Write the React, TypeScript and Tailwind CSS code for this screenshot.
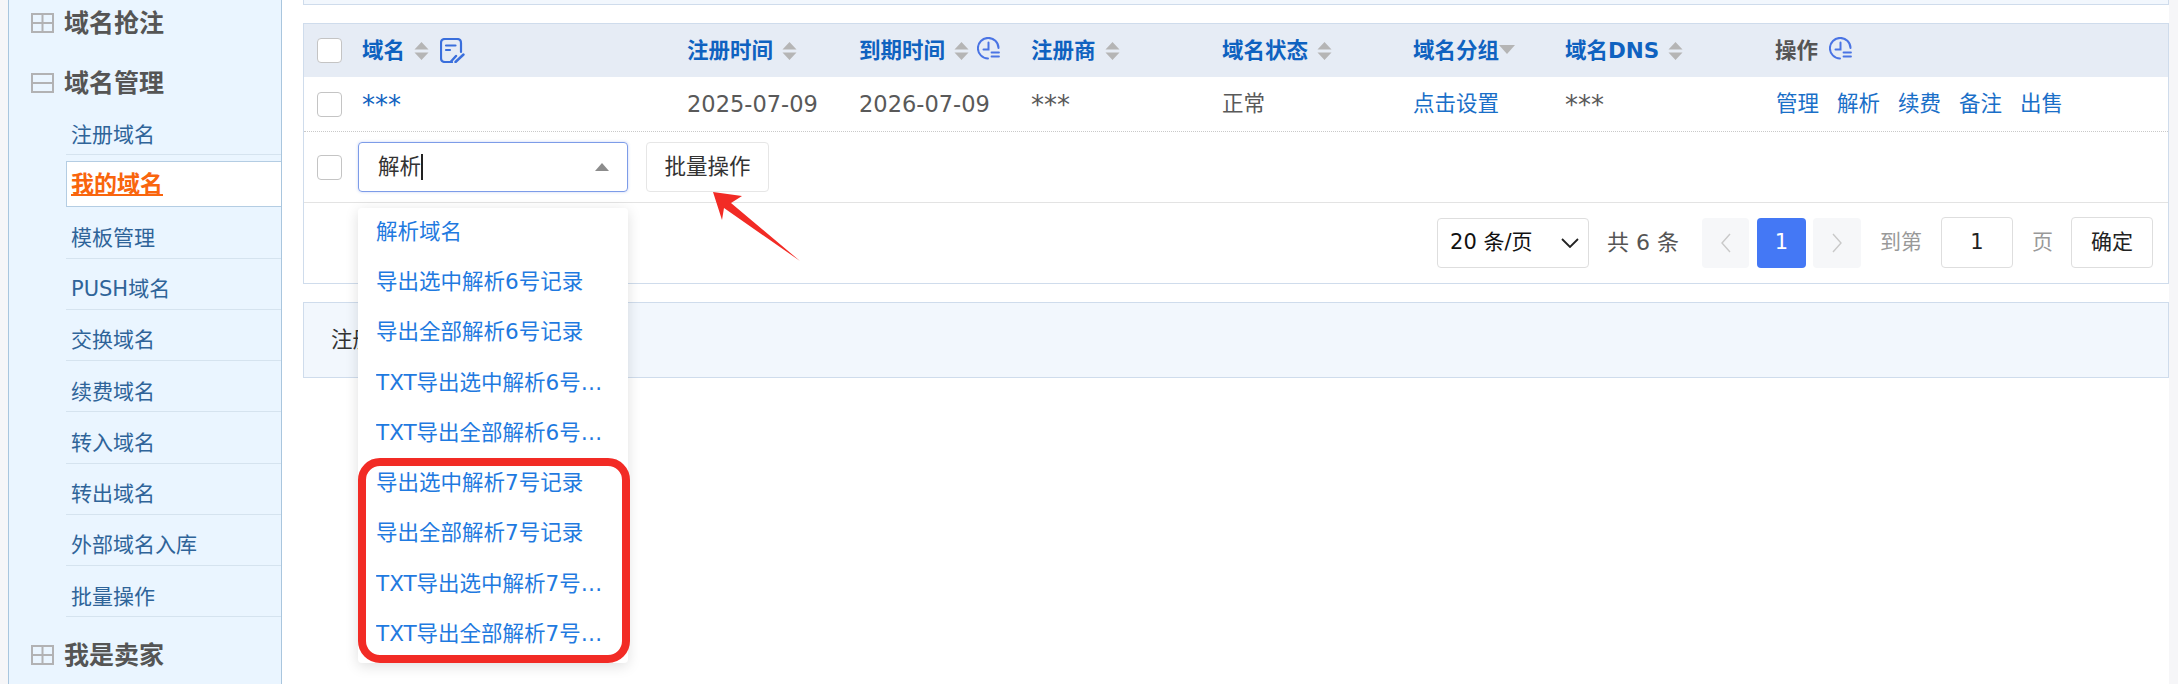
const cjk = "font-['DejaVu_Sans','Noto_Sans_CJK_SC',sans-serif]";

function SortIcon({ className = "" }: { className?: string }) {
	return (
		<svg width="15" height="18" viewBox="0 0 15 18" className={className}>
			<path d="M7.5 0 L14.5 7.5 H0.5 Z M0.5 10.5 H14.5 L7.5 18 Z" fill="#b5b5b5" />
		</svg>
	);
}

function NoteIcon() {
	return (
		<svg width="25" height="25" viewBox="0 0 25 25" fill="none" stroke="#3a6fdc" strokeWidth="2.2" strokeLinecap="round" className="ml-[11px]">
			<path d="M12 24 H5 Q1 24 1 20 V5 Q1 1 5 1 H17 Q21 1 21 5 V14" />
			<path d="M6 7.5 H15.5 M6 12 H10" />
			<path d="M11 23.5 L16 18 M15.5 24 L23.5 16.5" strokeWidth="2.4" />
		</svg>
	);
}

function ClockIcon({ className = "" }: { className?: string }) {
	return (
		<svg width="23" height="24" viewBox="0 0 23 24" fill="none" stroke="#4a74e4" strokeWidth="2" strokeLinecap="round" className={className}>
			<path d="M21.5 11 A10.3 10.3 0 1 0 11 21.5" />
			<path d="M11.5 5.5 V12.5 H6.5" />
			<path d="M14.5 15.5 H22 M22 19.5 H14.5" strokeWidth="1.8" />
		</svg>
	);
}

function TreeIcon({ open }: { open?: boolean }) {
	return (
		<svg width="23" height="20" viewBox="0 0 23 20" fill="none" stroke="#b2b2b4" strokeWidth="2" className="mr-[10px]">
			<rect x="1" y="1" width="21" height="18" />
			<path d={open ? "M1 10 H22" : "M1 10 H22 M11.5 1 V19"} />
		</svg>
	);
}

function Checkbox() {
	return <span className="block w-[25px] h-[25px] rounded-[4px] border border-[#c4c4c4] bg-white" />;
}

function SideGroup({ label, open }: { label: string; open?: boolean }) {
	return (
		<div className="h-[46px] flex items-center pl-[22px] text-[25px] font-bold text-[#555] leading-none">
			<TreeIcon open={open} />
			{label}
		</div>
	);
}

function SideLink({ label }: { label: string }) {
	return (
		<div className="h-[51.25px] ml-[57px] pl-[5px] pt-[12px] flex items-center border-b border-[#d5e3ef] text-[21px] text-[#2f6499] leading-none">
			{label}
		</div>
	);
}

function HeadCell({ label, sort = true, children, dark }: { label: string; sort?: boolean; children?: React.ReactNode; dark?: boolean }) {
	return (
		<div className={`flex items-center font-bold text-[21.5px] leading-none ${dark ? "text-[#555]" : "text-[#0f62c0]"}`}>
			{label}
			{sort && <SortIcon className="ml-[9px]" />}
			{children}
		</div>
	);
}

const menuItems = [
	"解析域名",
	"导出选中解析6号记录",
	"导出全部解析6号记录",
	"TXT导出选中解析6号记录",
	"TXT导出全部解析6号记录",
	"导出选中解析7号记录",
	"导出全部解析7号记录",
	"TXT导出选中解析7号记录",
	"TXT导出全部解析7号记录",
];

const tableCols = "grid grid-cols-[45px_325px_172px_172px_191px_191px_152px_210px_1fr] items-center";

export default function App() {
	return (
		<div className={`relative flex w-[2178px] h-[684px] overflow-hidden bg-white ${cjk}`}>
			<div className="w-[8px] bg-[#f6f6f8] shrink-0" />
			<aside className="w-[274px] shrink-0 bg-[#eaf5ff] border-x border-[#a9c6de]">
				<SideGroup label="域名抢注" />
				<div className="mt-[14px]">
					<SideGroup label="域名管理" open />
				</div>
				<div className="mt-[-2px]">
					<SideLink label="注册域名" />
					<div className="mt-[6px] ml-[57px] h-[46px] flex items-center pl-[4px] bg-white border border-r-0 border-[#b4cde3] text-[23px] font-bold text-[#f9650d] underline leading-none">
						我的域名
					</div>
					{["模板管理", "PUSH域名", "交换域名", "续费域名", "转入域名", "转出域名", "外部域名入库", "批量操作"].map((label) => (
						<SideLink key={label} label={label} />
					))}
				</div>
				<div className="mt-[15px]">
					<SideGroup label="我是卖家" />
				</div>
			</aside>

			<main className="w-[1866px] ml-[21px] shrink-0">
				<div className="h-[5px] border-x border-b border-[#cfdcec] bg-[#f2f7fd]" />

				<section className="mt-[18px] border border-[#cfdcec] h-[261px]">
					<div className={`${tableCols} h-[53px] bg-[#e6ecf5] pl-[13px]`}>
						<Checkbox />
						<HeadCell label="域名">
							<NoteIcon />
						</HeadCell>
						<HeadCell label="注册时间" />
						<HeadCell label="到期时间">
							<ClockIcon className="ml-[8px] -mt-[3px]" />
						</HeadCell>
						<HeadCell label="注册商" />
						<HeadCell label="域名状态" />
						<div className="flex items-center font-bold text-[21.5px] leading-none text-[#0f62c0]">
							域名分组
							<svg width="16" height="9" viewBox="0 0 16 9" className="-mt-[3px]">
								<path d="M0 0 H16 L8 9 Z" fill="#b5b5b5" />
							</svg>
						</div>
						<HeadCell label="域名DNS" />
						<HeadCell label="操作" sort={false} dark>
							<ClockIcon className="ml-[11px] -mt-[3px]" />
						</HeadCell>
					</div>

					<div className={`${tableCols} h-[55px] pl-[13px] border-b border-dotted border-[#c9c9c9] text-[21.5px] text-[#595959] leading-none`}>
						<Checkbox />
						<span className="text-[#0f62c0] text-[26px] mt-[2px]">***</span>
						<span className="text-[22.5px]">2025-07-09</span>
						<span className="text-[22.5px]">2026-07-09</span>
						<span className="text-[26px] mt-[2px]">***</span>
						<span>正常</span>
						<span className="text-[#1a6fc8]">点击设置</span>
						<span className="text-[26px] mt-[2px]">***</span>
						<div className="ml-[1px] flex gap-[18px] text-[#1a6fc8]">
							{["管理", "解析", "续费", "备注", "出售"].map((t) => (
								<span key={t}>{t}</span>
							))}
						</div>
					</div>

					<div className="h-[71px] flex items-center pl-[13px] border-b border-[#e3e3e3]">
						<Checkbox />
						<div className="ml-[16px] w-[270px] h-[50px] flex items-center rounded-[4px] border border-[#7d9ce8] shadow-[0_0_3px_rgba(70,110,230,0.3)] pl-[19px] pr-[18px] text-[21.5px] text-[#333] leading-none">
							<span>解析</span>
							<span className="w-[2px] h-[26px] bg-[#222]" />
							<svg width="14" height="8" viewBox="0 0 14 8" className="ml-auto">
								<path d="M7 0 L14 8 H0 Z" fill="#8c8c8c" />
							</svg>
						</div>
						<div className="ml-[18px] w-[123px] h-[50px] flex items-center justify-center rounded-[4px] border border-[#e6e6e6] text-[21.5px] text-[#333] leading-none">
							批量操作
						</div>
					</div>

					<div className="flex items-center justify-end pt-[14px] pr-[15px] text-[21px] leading-none">
						<div className="w-[152px] h-[50px] flex items-center justify-between pl-[12px] pr-[9px] rounded-[4px] border border-[#dedede] text-[#111]">
							<span>20 条/页</span>
							<svg width="18" height="10" viewBox="0 0 18 10" fill="none" stroke="#222" strokeWidth="1.8">
								<path d="M1 1 L9 9 L17 1" />
							</svg>
						</div>
						<span className="ml-[18px] mr-[23px] text-[#555] text-[22px]">共 6 条</span>
						<div className="w-[47px] h-[50px] flex items-center justify-center rounded-[4px] bg-[#f6f7f9]">
							<svg width="10" height="20" viewBox="0 0 10 20" fill="none" stroke="#c9c9c9" strokeWidth="1.4">
								<path d="M9 1 L1 10 L9 19" />
							</svg>
						</div>
						<div className="ml-[8px] w-[49px] h-[50px] flex items-center justify-center rounded-[4px] bg-[#4478f5] text-white">
							1
						</div>
						<div className="ml-[7px] w-[48px] h-[50px] flex items-center justify-center rounded-[4px] bg-[#f6f7f9]">
							<svg width="10" height="20" viewBox="0 0 10 20" fill="none" stroke="#c9c9c9" strokeWidth="1.4">
								<path d="M1 1 L9 10 L1 19" />
							</svg>
						</div>
						<span className="ml-[19px] text-[#999]">到第</span>
						<div className="ml-[19px] w-[72px] h-[51px] flex items-center justify-center rounded-[4px] border border-[#dedede] text-[#222]">
							1
						</div>
						<span className="ml-[19px] text-[#999]">页</span>
						<div className="ml-[18px] w-[82px] h-[51px] flex items-center justify-center rounded-[4px] border border-[#dedede] text-[#222]">
							确定
						</div>
					</div>
				</section>

				<div className="mt-[18px] h-[76px] flex items-center pl-[27px] border border-[#cfdcec] bg-[#f2f7fd] text-[21.5px] text-[#333] leading-none">
					注册
				</div>
			</main>

			<div className="flex-1 bg-[#f6f6f8]" />

			{/* dropdown opened from the batch select */}
			<div className="absolute left-[358px] top-[208px] w-[270px] h-[455px] flex flex-col rounded-[4px] bg-white shadow-[0_3px_14px_rgba(0,0,0,0.13)] text-[21.5px] text-[#1f7ae0] leading-none">
				<div className="-mt-[1.5px]">
					{menuItems.map((item) => (
						<div key={item} className="h-[50.25px] flex items-center pl-[18px] pr-[25px]">
							<span className="truncate">{item}</span>
						</div>
					))}
				</div>
			</div>

			{/* annotations drawn over the screenshot */}
			<div className="absolute left-[358px] top-[458px] w-[272px] h-[205px] rounded-[22px] border-[8px] border-[#f22b25]" />
			<svg width="100" height="80" viewBox="0 0 100 80" className="absolute left-[710px] top-[188px]">
				<path d="M3 4 L32 8 L21 15 L90 73 L14 20 L12 32 Z" fill="#f22b25" />
			</svg>
		</div>
	);
}
